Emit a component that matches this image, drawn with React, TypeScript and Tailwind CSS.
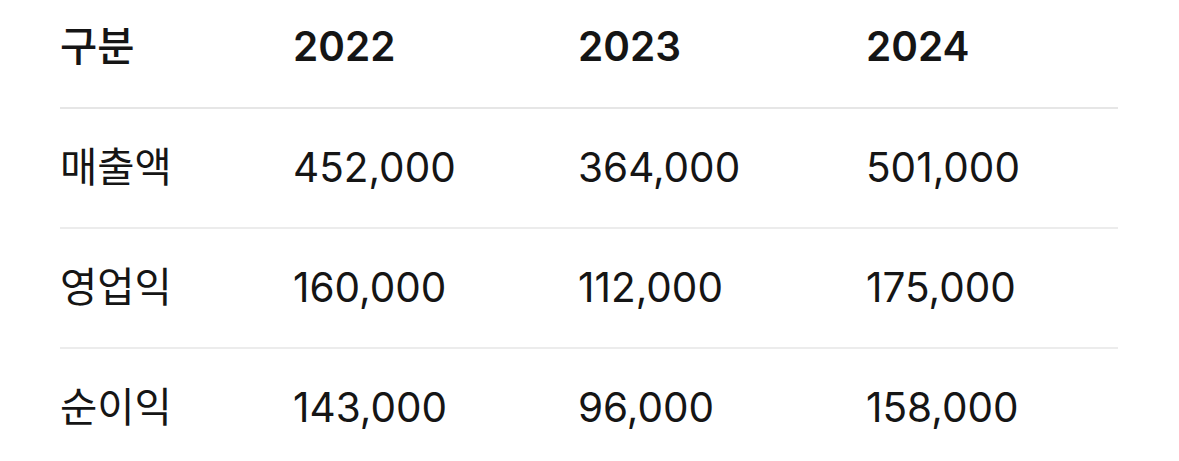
import React from "react";

const rows = [
  { label: "매출액", values: ["452,000", "364,000", "501,000"] },
  { label: "영업익", values: ["160,000", "112,000", "175,000"] },
  { label: "순이익", values: ["143,000", "96,000", "158,000"] },
];

const years = ["2022", "2023", "2024"];

export default function App() {
  return (
    <div
      className="w-[1179px] h-[461px] overflow-hidden bg-white text-[#151515]"
      style={{ fontFamily: 'Inter, "Noto Sans CJK KR", sans-serif' }}
    >
      <div className="pl-[60px] pr-[61px]">
        <table className="w-full table-fixed border-collapse text-[40.5px]">
          <colgroup>
            <col className="w-[233px]" />
            <col className="w-[285px]" />
            <col className="w-[288px]" />
            <col />
          </colgroup>
          <thead>
            <tr className="h-[108px] border-b-2 border-[#e6e6e6]">
              <th className="text-left font-medium align-middle pb-3">구분</th>
              {years.map((y) => (
                <th key={y} className="text-left font-semibold align-middle pb-3">
                  {y}
                </th>
              ))}
            </tr>
          </thead>
          <tbody>
            {rows.map((r, i) => (
              <tr
                key={r.label}
                className={`h-[120px] ${i < rows.length - 1 ? "border-b-2 border-[#ececec]" : ""}`}
              >
                <td className="align-middle">{r.label}</td>
                {r.values.map((v) => (
                  <td key={v} className="align-middle">
                    {v}
                  </td>
                ))}
              </tr>
            ))}
          </tbody>
        </table>
      </div>
    </div>
  );
}
